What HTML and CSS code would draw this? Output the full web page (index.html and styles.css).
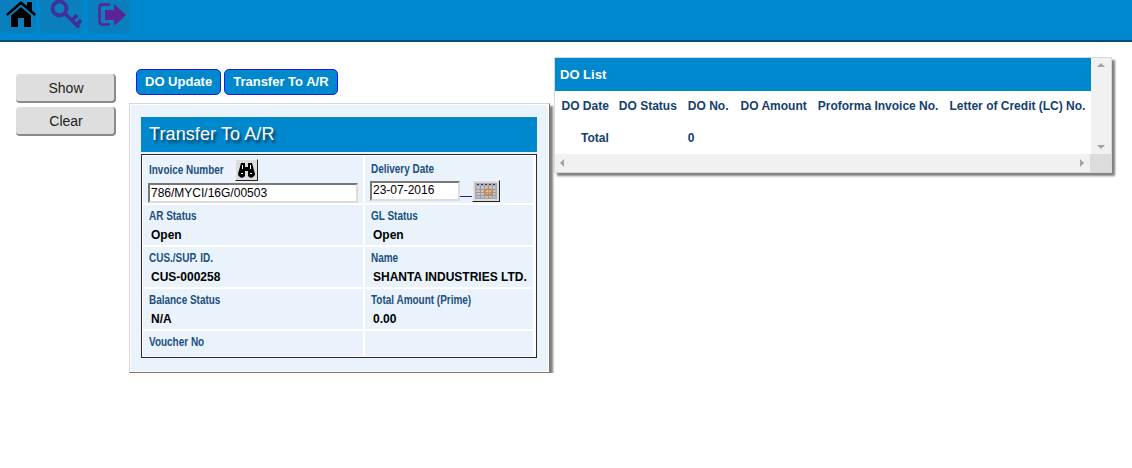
FILE: index.html
```html
<!DOCTYPE html>
<html lang="en">
<head>
    <meta charset="UTF-8">
    <title>Transfer To A/R</title>
    <link rel="stylesheet" href="styles.css">
</head>
<body>
<header class="topbar">
    <a class="tile tile-home">
        <svg width="30" height="26" viewBox="0 0 30 26"><path fill="#000" d="M15 0 L21 5 V1 H26 V9.500 L30 13 L28.500 15 L15 3.500 L1.500 15 L0 13 Z M15 6 L25 14.500 V26 H18 V17 H12 V26 H5 V14.500 Z"/></svg>
    </a>
    <a class="tile tile-key">
        <svg width="32" height="30" viewBox="0 0 32 30"><g fill="none" stroke="#40309c" stroke-width="3.800"><circle cx="9.500" cy="8.500" r="7"/><path d="M15 13.500 L29 27.500 M22 20.500 L27 15 M26.500 25 L31 20"/></g></svg>
    </a>
    <a class="tile tile-exit">
        <svg width="29" height="26" viewBox="0 0 29 26"><path fill="none" stroke="#5b2396" stroke-width="2.500" d="M12 2.500 H4.500 Q1.500 2.500 1.500 5.500 V19.500 Q1.500 22.500 4.500 22.500 H12"/><path fill="#5b2396" d="M7 8 H16 V2 L28 13 L16 24 V18 H7 Z"/></svg>
    </a>
</header>

<main class="content">
    <div class="side-buttons">
        <button class="side-btn" type="button">Show</button>
        <button class="side-btn" type="button">Clear</button>
    </div>

    <div class="work">
        <div class="tabs">
            <button class="tab" type="button">DO Update</button>
            <button class="tab" type="button">Transfer To A/R</button>
        </div>

        <section class="panel">
            <h2 class="panel-title">Transfer To A/R</h2>
            <div class="fields">
                <div class="cell">
                    <div class="label-row">
                        <label class="field-label">Invoice Number</label>
                        <button class="icon-btn find-btn" type="button">
                            <svg width="17" height="15" viewBox="0 0 17 15"><path fill="#000" d="M3 0 H7 V4 H10 V0 H14 L17 11 A3.800 3.800 0 0 1 10 13 V8 H7 V13 A3.800 3.800 0 0 1 0 11 Z"/><path stroke="#fff" d="M3 10.500 H5 M12 10.500 H14 M4.500 2 V6 M12.500 2 V6"/></svg>
                        </button>
                    </div>
                    <input class="text-input invoice-input" type="text" value="786/MYCI/16G/00503">
                </div>
                <div class="cell">
                    <label class="field-label date-label">Delivery Date</label>
                    <div class="date-row">
                        <input class="text-input date-input" type="text" value="23-07-2016">
                        <span class="date-link"></span>
                        <button class="icon-btn cal-btn" type="button">
                            <svg width="22" height="16" viewBox="0 0 22 16"><rect width="22" height="16" fill="#a9a9a9"/><rect x="1.500" y="3" width="19" height="11.500" fill="#c4c4c4"/><path stroke="#9a9aa4" fill="none" d="M1 6.500 H21 M1 9.500 H21 M1 12.500 H21 M5.500 3 V15 M9.500 3 V15 M13.500 3 V15 M17.500 3 V15"/><path stroke="#2c2c9a" stroke-dasharray="2 2" d="M2 1.500 H20"/><ellipse cx="13.500" cy="9" rx="4" ry="2.800" fill="none" stroke="#e0812f" stroke-width="1.800"/></svg>
                        </button>
                    </div>
                </div>

                <div class="cell">
                    <span class="field-label">AR Status</span>
                    <span class="field-value">Open</span>
                </div>
                <div class="cell">
                    <span class="field-label">GL Status</span>
                    <span class="field-value">Open</span>
                </div>

                <div class="cell">
                    <span class="field-label">CUS./SUP. ID.</span>
                    <span class="field-value">CUS-000258</span>
                </div>
                <div class="cell">
                    <span class="field-label">Name</span>
                    <span class="field-value">SHANTA INDUSTRIES LTD.</span>
                </div>

                <div class="cell">
                    <span class="field-label">Balance Status</span>
                    <span class="field-value">N/A</span>
                </div>
                <div class="cell">
                    <span class="field-label">Total Amount (Prime)</span>
                    <span class="field-value">0.00</span>
                </div>

                <div class="cell cell-last">
                    <span class="field-label">Voucher No</span>
                </div>
                <div class="cell cell-last"></div>
            </div>
        </section>
    </div>

    <section class="list-panel">
        <div class="list-main">
            <div class="list-view">
                <h3 class="list-title">DO List</h3>
                <table class="list-table">
                    <tr>
                        <th class="col-date">DO Date</th>
                        <th>DO Status</th>
                        <th class="col-no">DO No.</th>
                        <th>DO Amount</th>
                        <th>Proforma Invoice No.</th>
                        <th>Letter of Credit (LC) No.</th>
                    </tr>
                    <tr class="total-row">
                        <td class="col-date total-label">Total</td>
                        <td></td>
                        <td class="col-no">0</td>
                        <td></td>
                        <td></td>
                        <td></td>
                    </tr>
                </table>
            </div>
            <div class="scroll-v">
                <span class="arrow arrow-up"></span>
                <span class="arrow arrow-down"></span>
            </div>
        </div>
        <div class="scroll-h">
            <span class="arrow arrow-left"></span>
            <span class="arrow arrow-right"></span>
            <span class="scroll-corner"></span>
        </div>
    </section>
</main>
</body>
</html>
```

FILE: styles.css
```css
body {
    margin: 0;
    background-color: #fff;
    font-family: "Liberation Sans", Arial, sans-serif;
    font-size: 12px;
}

.topbar {
    display: flex;
    height: 40px;
    background-color: #0088cf;
    border-bottom: 2px solid #0a4a72;
}

.tile {
    display: flex;
    align-items: flex-start;
    box-sizing: border-box;
    height: 33px;
    background-color: #0a7fbe;
    border-radius: 0 0 5px 5px;
}

.tile-home {
    width: 36px;
    padding: 1px 0 0 6px;
}

.tile-key {
    width: 42px;
    margin-left: 4px;
    padding-left: 10px;
}

.tile-exit {
    width: 42px;
    margin-left: 6px;
    padding: 2px 0 0 10px;
}

.content {
    display: flex;
    align-items: flex-start;
}

.side-buttons {
    display: flex;
    flex-direction: column;
    gap: 4px;
    width: 100px;
    margin: 32px 0 0 16px;
}

.side-btn {
    height: 29px;
    padding: 0 0 0 2px;
    background-color: #dedede;
    border: none;
    border-radius: 4px;
    border-right: 2px solid #8a8a8a;
    border-bottom: 2px solid #8a8a8a;
    font-family: "Liberation Sans", Arial, sans-serif;
    font-size: 14px;
    color: #222;
}

.work {
    width: 425px;
    margin: 27px 0 0 13px;
}

.tabs {
    display: flex;
    gap: 3px;
    margin-left: 7px;
}

.tab {
    height: 26px;
    padding: 0 8px 2px;
    background-color: #0088cf;
    border: 1px solid #1c1ce0;
    border-radius: 5px;
    color: #fff;
    font-family: "Liberation Sans", Arial, sans-serif;
    font-size: 13px;
    font-weight: bold;
    white-space: nowrap;
}

.panel {
    width: 421px;
    height: 270px;
    box-sizing: border-box;
    margin-top: 8px;
    padding: 13px 12px 0 11px;
    background-color: #eaf3fb;
    border: 1px solid #d8d8d8;
    border-right-color: #7d7668;
    border-bottom-color: #7d7668;
    box-shadow: 3px 3px 2px #808080;
    outline: 1px solid #fff;
    outline-offset: -2px;
}

.panel-title {
    height: 35px;
    margin: 0 0 2px;
    padding-left: 8px;
    background-color: #0088cf;
    color: #fff;
    font-size: 18px;
    font-weight: normal;
    letter-spacing: 0.1px;
    line-height: 35px;
    text-shadow: 2px 3px 3px #0b3550;
}

.fields {
    display: grid;
    grid-template-columns: 222px 1fr;
    grid-template-rows: 49px 42px 42px 42px 1fr;
    height: 204px;
    box-sizing: border-box;
    padding: 1px;
    background-color: #fff;
    border: 1px solid #2a2a2a;
}

.cell {
    display: flex;
    flex-direction: column;
    align-items: flex-start;
    box-sizing: border-box;
    padding: 4px 0 0 6px;
    background-color: #eaf3fb;
    border-right: 2px solid #fff;
    border-bottom: 2px solid #fff;
}

.cell-last {
    border-bottom: none;
}

/* the labels in the original are a narrower face than Arial */
.field-label {
    display: inline-block;
    height: 14px;
    color: #1a4f7e;
    font-size: 12px;
    font-weight: bold;
    line-height: 14px;
    white-space: nowrap;
    transform: scaleX(0.83);
    transform-origin: left center;
}

.field-value {
    margin: 5px 0 0 2px;
    color: #000;
    font-size: 12px;
    font-weight: bold;
    line-height: 14px;
    white-space: nowrap;
}

.label-row {
    display: flex;
    align-items: center;
    height: 22px;
    margin-top: -1px;
}

.label-row .field-label {
    width: 86px;
}

.date-label {
    margin-top: 2px;
}

.icon-btn {
    display: flex;
    justify-content: center;
    align-items: center;
    padding: 0;
    background-color: #dcdcdc;
    border: 1px solid #f4f4f4;
    border-right-color: #222;
    border-bottom-color: #222;
}

.find-btn {
    width: 23px;
    height: 22px;
}

.text-input {
    box-sizing: border-box;
    height: 20px;
    padding: 0 1px;
    background-color: #fff;
    border: 2px solid #dcdcdc;
    border-top-color: #777;
    border-left-color: #777;
    font-family: "Liberation Sans", Arial, sans-serif;
    font-size: 12px;
    color: #000;
}

.invoice-input {
    width: 210px;
    margin: 2px 0 0 -1px;
}

.date-input {
    width: 90px;
    margin-top: 1px;
    padding-bottom: 2px;
}

.date-row {
    display: flex;
    align-items: flex-start;
    margin: 4px 0 0 -1px;
}

.date-link {
    width: 12px;
    height: 1px;
    margin-top: 16px;
    background-color: #22228a;
}

.cal-btn {
    width: 28px;
    height: 22px;
}

.list-panel {
    width: 558px;
    box-sizing: border-box;
    margin-top: 15px;
    background-color: #fff;
    border: 1px solid #d8d8d8;
    box-shadow: 3px 3px 2px #808080;
}

.list-main {
    display: flex;
    height: 96px;
}

.list-view {
    width: 536px;
}

.list-title {
    height: 33px;
    margin: 0;
    padding-left: 5px;
    background-color: #0088cf;
    color: #fff;
    font-size: 13px;
    font-weight: bold;
    line-height: 33px;
}

.list-table {
    border-collapse: collapse;
    margin: 4px 0 0 1px;
    color: #14406e;
    white-space: nowrap;
}

.list-table th,
.list-table td {
    height: 22px;
    padding: 0 5.500px;
    font-size: 12px;
    font-weight: bold;
    text-align: left;
}

.list-table .col-date {
    padding-right: 4.500px;
}

.list-table .col-no {
    padding-right: 6.500px;
}

.list-table .total-row td {
    height: 42px;
}

.list-table .total-label {
    text-align: right;
}

.scroll-v {
    position: relative;
    flex: 1;
    background-color: #f1f1f1;
}

.scroll-h {
    position: relative;
    height: 18px;
    background-color: #f1f1f1;
}

.scroll-corner {
    position: absolute;
    top: 0;
    right: 0;
    width: 21px;
    height: 18px;
    background-color: #dcdcdc;
}

.arrow {
    position: absolute;
    width: 0;
    height: 0;
    border-style: solid;
    border-color: transparent;
}

.arrow-up {
    top: 5px;
    left: 6px;
    border-width: 0 4px 4px;
    border-bottom-color: #a3a3a3;
}

.arrow-down {
    bottom: 5px;
    left: 6px;
    border-width: 4px 4px 0;
    border-top-color: #a3a3a3;
}

.arrow-left {
    top: 5px;
    left: 5px;
    border-width: 4px 4px 4px 0;
    border-right-color: #a3a3a3;
}

.arrow-right {
    top: 5px;
    right: 27px;
    border-width: 4px 0 4px 4px;
    border-left-color: #a3a3a3;
}
```
